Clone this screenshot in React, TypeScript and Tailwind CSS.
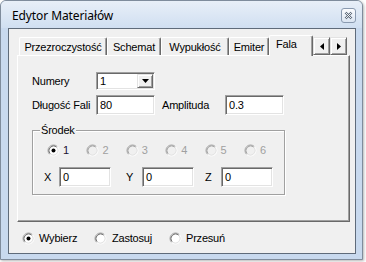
import React from "react";

function Radio({ checked = false, disabled = false }: { checked?: boolean; disabled?: boolean }) {
  return (
    <svg width="13" height="13" viewBox="0 0 13 13" className="shrink-0">
      <circle cx="6.5" cy="6.5" r="4.2" fill={disabled ? "#f0f0f0" : "#ffffff"} />
      <path d="M2.61 10.39 A5.5 5.5 0 0 1 10.39 2.61" fill="none" stroke="#a0a0a0" />
      <path d="M10.39 2.61 A5.5 5.5 0 0 1 2.61 10.39" fill="none" stroke="#ffffff" />
      <path d="M3.32 9.68 A4.5 4.5 0 0 1 9.68 3.32" fill="none" stroke={disabled ? "#a0a0a0" : "#696969"} />
      <path d="M9.68 3.32 A4.5 4.5 0 0 1 3.32 9.68" fill="none" stroke="#e3e3e3" />
      {checked && <circle cx="6.5" cy="6.5" r="2" fill="#000" />}
    </svg>
  );
}

const sunken =
  "bg-white border border-t-[#a0a0a0] border-l-[#a0a0a0] border-r-white border-b-white shadow-[inset_1px_1px_0_#696969,inset_-1px_-1px_0_#e3e3e3]";
const raised =
  "bg-[#f0f0f0] border border-t-[#e3e3e3] border-l-[#e3e3e3] border-r-[#696969] border-b-[#696969] shadow-[inset_1px_1px_0_#fff,inset_-1px_-1px_0_#a0a0a0]";

function Input({ value, w }: { value: string; w: string }) {
  return (
    <div className={`${sunken} ${w} h-[20px] flex items-center pl-[3px] text-black`}>
      {value}
    </div>
  );
}

function Tab({ label, w }: { label: string; w: string }) {
  return (
    <div
      className={`${w} h-[18px] rounded-t-[2px] border-t border-l border-r border-t-white border-l-white border-r-[#696969] shadow-[inset_-1px_0_0_#a0a0a0] flex items-center justify-center pt-[2px] bg-[#f0f0f0]`}
    >
      {label}
    </div>
  );
}

export default function App() {
  const nums = ["1", "2", "3", "4", "5", "6"];
  return (
    <div className="w-[366px] h-[262px] bg-white font-['Liberation_Sans',Arial,sans-serif] text-[11px] tracking-[-0.2px] leading-[13px] text-black">
      <div className="w-[363px] h-[260px] border border-[#7f8c9c] rounded-t-[6px] bg-[#c8d9ee] flex flex-col shadow-[1px_1px_3px_rgba(0,0,0,0.3)]">
        {/* Title bar */}
        <div className="h-[27px] shrink-0 flex justify-between items-start rounded-t-[5px] bg-[linear-gradient(#e8eff8,#d0dff1)]">
          <span className="ml-[11px] mt-[7px] font-['Noto_Sans',sans-serif] text-[12px] leading-[16px] tracking-[-0.1px] text-black">
            Edytor Materiałów
          </span>
          <div className="mt-[7px] mr-[6px] w-[15px] h-[15px] rounded-[3px] border border-[#8a9ab0] bg-[linear-gradient(#fbfcfe,#dbe5f2)] flex items-center justify-center">
            <svg width="9" height="9" viewBox="0 0 9 9">
              <path d="M1.5 1.5 L7.5 7.5 M7.5 1.5 L1.5 7.5" stroke="#5b6878" strokeWidth="2.4" />
              <path d="M1.5 1.5 L7.5 7.5 M7.5 1.5 L1.5 7.5" stroke="#ffffff" strokeWidth="0.9" />
            </svg>
          </div>
        </div>

        {/* Client area */}
        <div className="ml-[7px] w-[348px] h-[226px] shrink-0 border border-[#5f6b7a] bg-[#f0f0f0] flex flex-col">
          <div className="px-[8px] flex flex-col">
            {/* Tabs row */}
            <div className="mt-[6px] h-[20px] flex items-end pl-[2px]">
              <Tab label="Przezroczystość" w="w-[88px]" />
              <Tab label="Schemat" w="w-[54px]" />
              <Tab label="Wypukłość" w="w-[68px]" />
              <Tab label="Emiter" w="w-[40px]" />
              <div className="relative z-10 w-[44px] h-[21px] -mb-[1px] rounded-t-[2px] border-t border-l border-r border-t-white border-l-white border-r-[#696969] shadow-[inset_-1px_0_0_#a0a0a0] bg-[#f0f0f0] flex items-start pt-[2px] pl-[6px]">
                Fala
              </div>
              <div className="flex h-[18px]">
                <div className={`${raised} w-[17px] h-[18px] flex items-center justify-center`}>
                  <svg width="4" height="7" viewBox="0 0 4 7">
                    <path d="M4 0 L0 3.5 L4 7 Z" fill="#000" />
                  </svg>
                </div>
                <div className={`${raised} w-[17px] h-[18px] flex items-center justify-center`}>
                  <svg width="4" height="7" viewBox="0 0 4 7">
                    <path d="M0 0 L4 3.5 L0 7 Z" fill="#000" />
                  </svg>
                </div>
              </div>
            </div>

            {/* Tab panel */}
            <div className="w-[333px] h-[167px] border border-t-white border-l-white border-r-[#696969] border-b-[#696969] shadow-[inset_-1px_-1px_0_#a0a0a0] flex flex-col pl-[14px]">
              <div className="mt-[16px] h-[18px] flex items-center">
                <span className="w-[64px]">Numery</span>
                <div className={`${sunken} w-[59px] h-[18px] flex items-center`}>
                  <span className="flex-1 pl-[3px]">1</span>
                  <div className={`${raised} w-[16px] h-[14px] mr-[1px] flex items-center justify-center`}>
                    <svg width="7" height="4" viewBox="0 0 7 4">
                      <path d="M0 0 L7 0 L3.5 4 Z" fill="#000" />
                    </svg>
                  </div>
                </div>
              </div>

              <div className="mt-[5px] h-[20px] flex items-center">
                <span className="w-[64px]">Długość Fali</span>
                <Input value="80" w="w-[59px]" />
                <span className="ml-[7px] w-[63px]">Amplituda</span>
                <Input value="0.3" w="w-[59px]" />
              </div>

              {/* Group box */}
              <div className="relative mt-[15px] w-[253px] h-[65px] border border-[#a0a0a0] shadow-[inset_1px_1px_0_#fff,1px_1px_0_#fff] flex flex-col">
                <span className="absolute left-[7px] -top-[7px] px-[1px] bg-[#f0f0f0]">Środek</span>
                <div className="mt-[13px] h-[13px] flex items-center pl-[14px]">
                  {nums.map((n, i) => (
                    <div key={n} className="w-[39.4px] shrink-0 flex items-center gap-[3px]">
                      <Radio checked={i === 0} disabled={i !== 0} />
                      <span className={i === 0 ? "text-[#1b1030]" : "text-[#a0a0a0]"}>{n}</span>
                    </div>
                  ))}
                </div>
                <div className="mt-[10px] h-[20px] flex items-center pl-[11px]">
                  <span className="w-[15px]">X</span>
                  <Input value="0" w="w-[52px]" />
                  <span className="ml-[15px] w-[16px]">Y</span>
                  <Input value="0" w="w-[52px]" />
                  <span className="ml-[11px] w-[16px]">Z</span>
                  <Input value="0" w="w-[52px]" />
                </div>
              </div>
            </div>
          </div>

          {/* Bottom radios */}
          <div className="mt-[10px] h-[13px] flex items-center pl-[13px]">
            <div className="w-[72px] flex items-center gap-[4px]">
              <Radio checked />
              <span>Wybierz</span>
            </div>
            <div className="w-[75px] flex items-center gap-[5px]">
              <Radio />
              <span>Zastosuj</span>
            </div>
            <div className="flex items-center gap-[4px]">
              <Radio />
              <span>Przesuń</span>
            </div>
          </div>
        </div>
      </div>
    </div>
  );
}
